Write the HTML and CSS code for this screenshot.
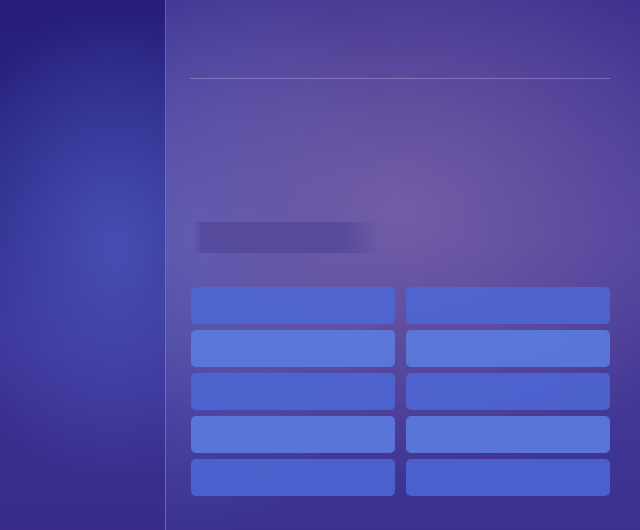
FILE: index.html
```html
<!DOCTYPE html>
<html>
<head>
  <title>Dashboard</title>
  <link rel="stylesheet" href="styles.css">
</head>
<body>

  <div class="sidebar"></div>

  <div class="main">
    <div class="header"></div>

    <div class="title-skeleton"></div>

    <div class="grid">
      <div class="tile dark"></div>
      <div class="tile dark"></div>
      <div class="tile light"></div>
      <div class="tile light"></div>
      <div class="tile dark"></div>
      <div class="tile dark"></div>
      <div class="tile light"></div>
      <div class="tile light"></div>
      <div class="tile dark"></div>
      <div class="tile dark"></div>
    </div>
  </div>

</body>
</html>
```

FILE: styles.css
```css
html, body {
  height: 100%;
}

body {
  margin: 0;
  padding: 0;
  display: flex;
  font-family: 'Liberation Sans', sans-serif;
  overflow: hidden;
  background:
    radial-gradient(ellipse 340px 270px at 400px 210px, rgba(118, 96, 166, 0.9), rgba(118, 96, 166, 0) 100%),
    radial-gradient(ellipse 220px 300px at 190px 240px, rgba(90, 100, 190, 0.7), rgba(90, 100, 190, 0) 100%),
    linear-gradient(to bottom, #40338f 0%, #4d3f9c 45%, #3a3190 100%);
}

/* Sidebar */
.sidebar {
  width: 165px;
  flex-shrink: 0;
  height: 100%;
  border-right: 1px solid rgba(150, 150, 230, 0.55);
  background:
    radial-gradient(ellipse 170px 240px at 115px 245px, rgba(76, 86, 186, 0.8), rgba(76, 86, 186, 0) 100%),
    linear-gradient(to bottom, #261d79 0%, #2c2a88 35%, #3c3296 65%, #382c88 100%);
}

/* Main */
.main {
  flex: 1;
  display: flex;
  flex-direction: column;
  padding: 0 30px 0 24px;
}

.header {
  height: 78px;
  border-bottom: 1px solid rgba(200, 180, 240, 0.4);
}

.title-skeleton {
  margin-top: 143px;
  margin-left: 3px;
  width: 186px;
  height: 31px;
  background: linear-gradient(
    to right,
    rgba(80, 68, 150, 0) 0%,
    rgba(82, 70, 152, 0.75) 5%,
    rgba(82, 70, 152, 0.75) 82%,
    rgba(80, 68, 150, 0) 100%
  );
}

.grid {
  margin-top: 34px;
  margin-left: 1px;
  display: grid;
  grid-template-columns: 1fr 1fr;
  column-gap: 11px;
  row-gap: 6px;
}

.tile {
  height: 37px;
  border-radius: 5px;
}

.tile.dark {
  background-color: rgba(76, 102, 212, 0.88);
}

.tile.light {
  background-color: rgba(90, 124, 222, 0.9);
}
```
